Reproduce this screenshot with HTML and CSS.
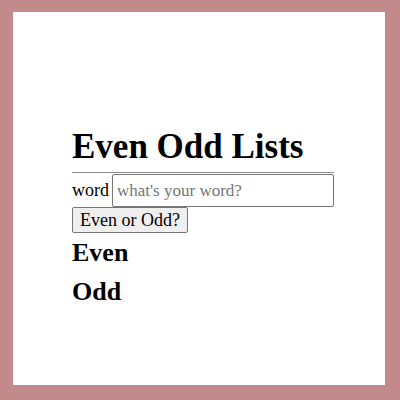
FILE: index.html
```html
<!DOCTYPE html>
<html lang="en">
<head>
<meta charset="utf-8">
<title>Even Odd Lists</title>
<link rel="stylesheet" href="styles.css">
</head>
<body>
<main class="card">
  <div class="content">
    <h1 class="title">Even Odd Lists</h1>
    <form class="form">
      <div class="field">
        <label for="word">word</label>
        <input class="word-input" id="word" type="text" placeholder="what's your word?">
      </div>
      <button class="submit" type="button">Even or Odd?</button>
    </form>
    <h2 class="list-title">Even</h2>
    <h2 class="list-title">Odd</h2>
  </div>
</main>
</body>
</html>
```
FILE: styles.css
```css
* {
  box-sizing: border-box;
}

body {
  margin: 0;
  min-height: 100vh;
  padding: 12px 15px 15px 13px;
  display: flex;
  background: #c38a8c;
  color: #000;
  font-family: "Liberation Serif", "Times New Roman", serif;
  font-size: 18px;
}

.card {
  flex: 1;
  display: flex;
  align-items: center;
  justify-content: center;
  padding: 41px 0 0 8px;
  background: #fff;
}

.content {
  width: 262px;
}

.title {
  margin: 0;
  padding-bottom: 5px;
  border-bottom: 1px solid #888;
  font-size: 35px;
  line-height: 40px;
}

.form {
  padding-top: 1px;
}

.field {
  display: flex;
  align-items: center;
  gap: 3px;
}

.word-input {
  flex: 1;
  min-width: 0;
  height: 33px;
  padding: 1px 4px;
  border: 1px solid #767676;
  border-radius: 2px;
  font: inherit;
  font-size: 17px;
}

.word-input::placeholder {
  color: #757575;
}

.submit {
  display: block;
  height: 26px;
  padding: 1px 7px 0;
  border: 1px solid #767676;
  border-radius: 2px;
  background: #efefef;
  color: #000;
  font: inherit;
}

.list-title {
  margin: 0;
  font-size: 26px;
  line-height: 39px;
}
```
